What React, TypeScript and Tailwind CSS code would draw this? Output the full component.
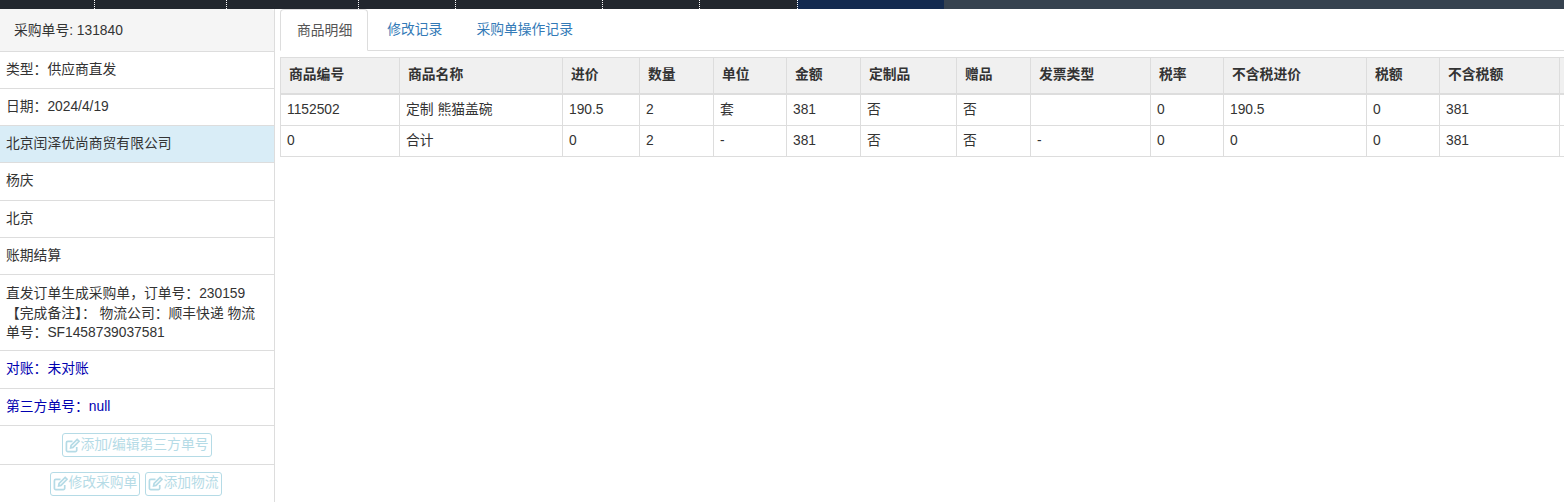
const font = "font-['Liberation_Sans','Noto_Sans_CJK_SC',sans-serif]";

const cols = [119, 163, 77, 74, 73, 74, 96, 74, 120, 73, 143, 73, 120, 20];
const heads = ["商品编号","商品名称","进价","数量","单位","金额","定制品","赠品","发票类型","税率","不含税进价","税额","不含税额",""];
const row1 = ["1152502","定制 熊猫盖碗","190.5","2","套","381","否","否","","0","190.5","0","381",""];
const row2 = ["0","合计","0","2","-","381","否","否","-","0","0","0","381",""];

const segs = [
  ["w-[94px]","bg-[#22272e]"],["w-[132px]","bg-[#22272e]"],["w-[132px]","bg-[#22272e]"],["w-[97px]","bg-[#22272e]"],
  ["w-[147px]","bg-[#22272e]"],["w-[97px]","bg-[#22272e]"],["w-[98px]","bg-[#22272e]"],["w-[147px]","bg-[#132a4f]"],["flex-1","bg-[#36424f]"],
];

function Edit() {
  return (
    <svg viewBox="0 0 16 16" className="w-[15px] h-[15px] shrink-0" fill="none" stroke="currentColor" strokeWidth="1.8">
      <path d="M12.5 9.5v3.5a1.5 1.5 0 0 1-1.5 1.5H3a1.5 1.5 0 0 1-1.5-1.5V5A1.5 1.5 0 0 1 3 3.5h5" />
      <path d="M6 10.5l.5-2.5 6.5-6.5 2 2-6.5 6.5z" />
    </svg>
  );
}

function Btn({ children }: { children: string }) {
  return (
    <span className="inline-flex items-center h-[24px] px-[2px] border border-[#b5dbe6] rounded-[3px] text-[#b5dbe6]">
      <Edit />
      <span>{children}</span>
    </span>
  );
}

function Item({ children, h, cls = "" }: { children: React.ReactNode; h: string; cls?: string }) {
  return <div className={`border-b border-[#dddddd] px-[6px] flex items-center ${h} ${cls}`}>{children}</div>;
}

export default function App() {
  return (
    <div className={`${font} w-[1564px] h-[502px] overflow-hidden bg-white text-[13.8px] text-[#333333] flex flex-col`}>
      <div className="flex h-[9px] shrink-0">
        {segs.map(([w, b], i) => (
          <div key={i} className={`${w} ${b} ${i > 0 && i < 8 ? "border-l border-dotted border-white" : ""}`} />
        ))}
      </div>
      <div className="flex flex-1 min-h-0">
        <div className="w-[275px] shrink-0 border-r border-[#dddddd]">
          <div className="h-[43px] bg-[#f5f5f5] border-b border-[#dddddd] px-[14px] pt-[2px] flex items-center rounded-tr-[3px]">采购单号: 131840</div>
          <Item h="h-[37px]">类型：供应商直发</Item>
          <Item h="h-[37px]">日期：2024/4/19</Item>
          <Item h="h-[37px]" cls="bg-[#d9edf7]">北京闰泽优尚商贸有限公司</Item>
          <Item h="h-[38px]">杨庆</Item>
          <Item h="h-[37px]">北京</Item>
          <Item h="h-[37px]">账期结算</Item>
          <div className="h-[76px] border-b border-[#dddddd] px-[6px] pt-[9px] leading-[19.6px]">
            直发订单生成采购单，订单号：230159<br />【完成备注】： 物流公司：顺丰快递 物流单号：SF1458739037581
          </div>
          <Item h="h-[38px]" cls="text-[#0000b0]">对账：未对账</Item>
          <Item h="h-[37px]" cls="text-[#0000b0]">第三方单号：null</Item>
          <div className="h-[39px] border-b border-[#dddddd] flex items-center justify-center"><Btn>添加/编辑第三方单号</Btn></div>
          <div className="h-[37px] flex items-center justify-center gap-[5px] pr-[2px]"><Btn>修改采购单</Btn><Btn>添加物流</Btn></div>
        </div>
        <div className="flex-1 min-w-0 pl-[5px] overflow-hidden">
          <div className="flex h-[42px] border-b border-[#dddddd] text-[#337ab7]">
            <div className="h-[42px] pl-[16px] pr-[15px] pt-[2px] flex items-center border border-[#dddddd] border-b-white rounded-t-[4px] bg-white text-[#555555]">商品明细</div>
            <div className="ml-[2px] px-[17px] pt-[2px] flex items-center">修改记录</div>
            <div className="px-[17px] pt-[2px] flex items-center">采购单操作记录</div>
          </div>
          <div className="mt-[6px] w-[1300px] border-t border-l border-[#dddddd]">
            <div className="flex h-[37px] bg-[#f0f0f0] border-b-2 border-[#dddddd] font-bold">
              {heads.map((t, i) => (
                <div key={i} style={{ width: cols[i] }} className="shrink-0 border-r border-[#dddddd] pl-[8px] pb-[1px] flex items-center">{t}</div>
              ))}
            </div>
            <div className="flex h-[31px] border-b border-[#dddddd]">
              {row1.map((t, i) => (
                <div key={i} style={{ width: cols[i] }} className="shrink-0 border-r border-[#dddddd] pl-[6px] flex items-center">{t}</div>
              ))}
            </div>
            <div className="flex h-[31px] border-b border-[#dddddd]">
              {row2.map((t, i) => (
                <div key={i} style={{ width: cols[i] }} className="shrink-0 border-r border-[#dddddd] pl-[6px] flex items-center">{t}</div>
              ))}
            </div>
          </div>
        </div>
      </div>
    </div>
  );
}
